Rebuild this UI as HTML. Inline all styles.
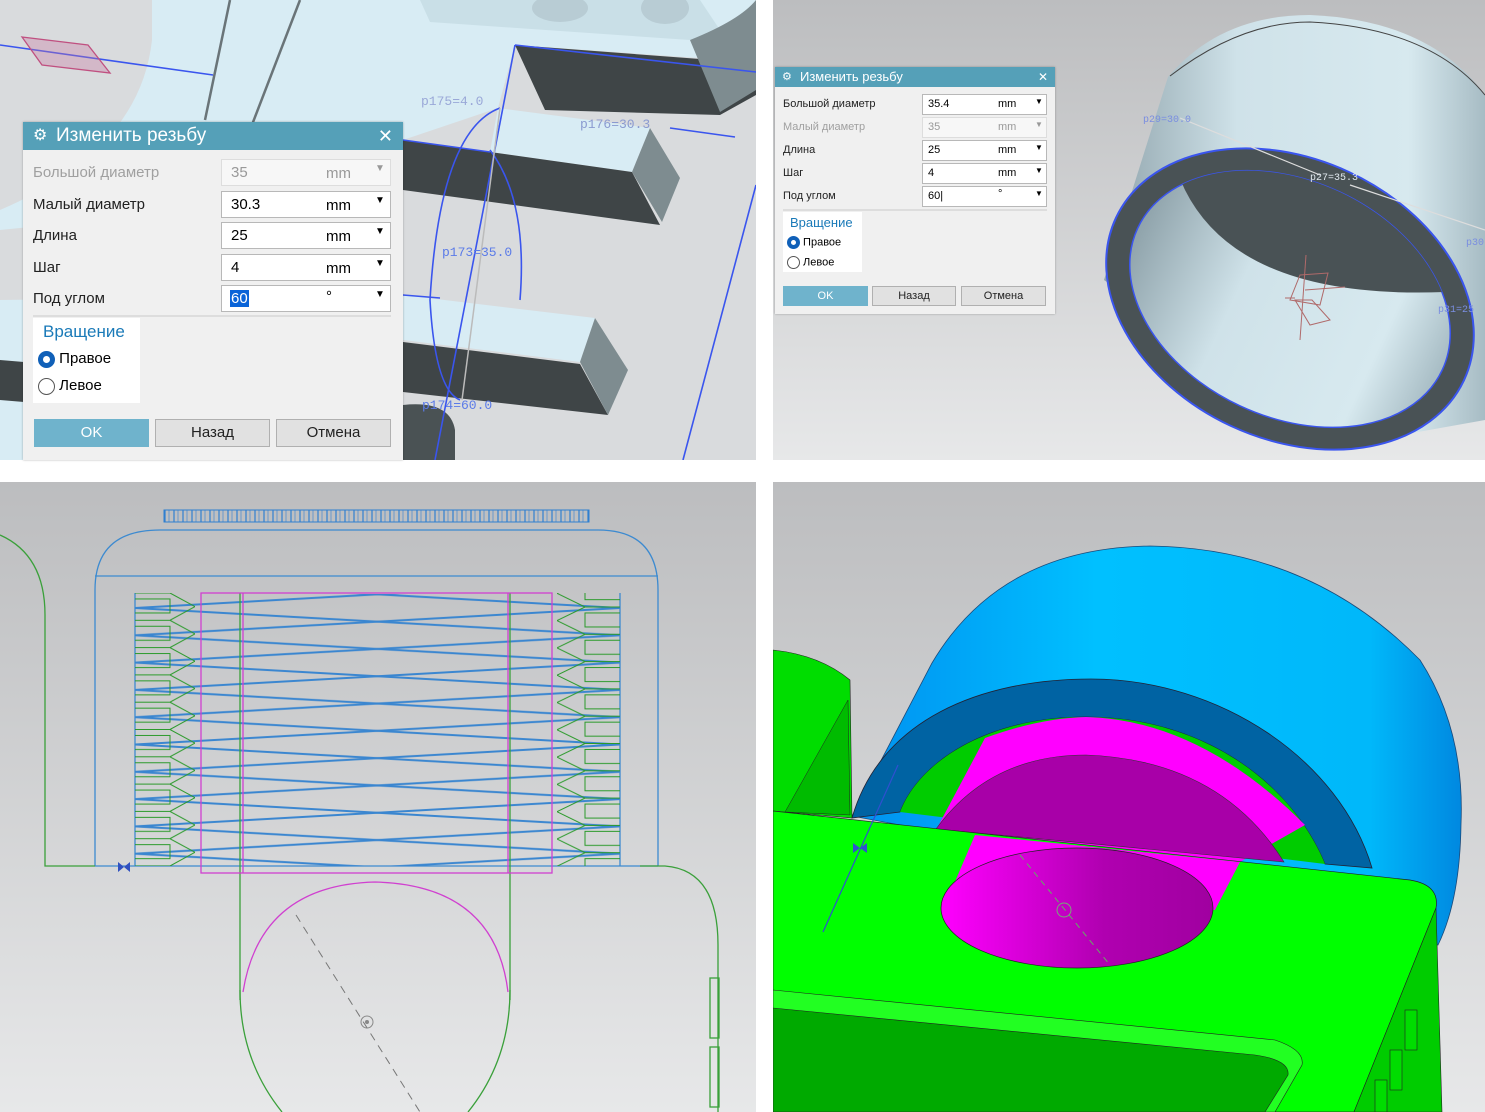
<!DOCTYPE html>
<html><head><meta charset="utf-8">
<style>
*{margin:0;padding:0;box-sizing:border-box}
body{width:1485px;height:1112px;background:#fff;position:relative;overflow:hidden;font-family:"Liberation Sans","DejaVu Sans",sans-serif}
svg{position:absolute;left:0;top:0}
.dlg{position:absolute;background:#f0f0f0;box-shadow:0 0 2px rgba(0,0,0,.3)}
.tt{background:#55a0b8;color:#fff;position:relative}
.lbl{position:absolute;color:#222}
.dis{color:#a0a0a0}
.inp{position:absolute;background:#fff;border:1px solid #b8b8b8}
.inp span{position:absolute}
.btn{position:absolute;background:#e1e1e1;border:1px solid #b0b0b0;text-align:center;color:#222}
.ok{background:#6fb3cc;border-color:#6fb3cc;color:#fff}
.grp{position:absolute;background:#fff}
.rad{display:inline-block;border-radius:50%;vertical-align:middle}
</style></head><body>
<svg width="1485" height="1112" viewBox="0 0 1485 1112">
<defs>
<linearGradient id="g2" x1="0" y1="0" x2="0" y2="1"><stop offset="0" stop-color="#bcbdbf"/><stop offset="1" stop-color="#e7e8e9"/></linearGradient>
<linearGradient id="cyl" x1="0" y1="0" x2="1" y2="0"><stop offset="0" stop-color="#8fa3ab"/><stop offset=".35" stop-color="#cfe2e9"/><stop offset=".8" stop-color="#d7e9ef"/><stop offset="1" stop-color="#a7bcc4"/></linearGradient>
<linearGradient id="dome" x1="0" y1="0" x2="1" y2="0"><stop offset="0" stop-color="#0090f0"/><stop offset=".4" stop-color="#00c0ff"/><stop offset=".85" stop-color="#00b8fa"/><stop offset="1" stop-color="#0088e0"/></linearGradient>
<linearGradient id="mag" x1="0" y1="0" x2="1" y2="0"><stop offset="0" stop-color="#ff00ff"/><stop offset=".6" stop-color="#b000b0"/><stop offset="1" stop-color="#a000a0"/></linearGradient>
<pattern id="thr" x="135" y="608" width="485" height="27.3" patternUnits="userSpaceOnUse">
<g stroke="#3a86d0" stroke-width="2" fill="none"><line x1="0" y1="0" x2="485" y2="27.3"/><line x1="0" y1="27.3" x2="485" y2="0"/></g>
</pattern>
<pattern id="zl" x="135" y="593" width="60" height="27.3" patternUnits="userSpaceOnUse">
<g stroke="#2a9a2a" stroke-width="1" fill="none"><polyline points="0,0 35,0 60,13.6 35,27.3 0,27.3"/><polyline points="0,6 35,6 35,20 0,20"/></g>
</pattern>
<pattern id="zr" x="557" y="607" width="63" height="27.3" patternUnits="userSpaceOnUse">
<g stroke="#2a9a2a" stroke-width="1" fill="none"><polyline points="63,0 28,0 0,13.6 28,27.3 63,27.3"/><polyline points="63,6 28,6 28,20 63,20"/></g>
</pattern>
<pattern id="teeth" x="164" y="510" width="9" height="12" patternUnits="userSpaceOnUse"><line x1="1" y1="0" x2="1" y2="12" stroke="#2f7fd0" stroke-width="1.2"/><line x1="5" y1="0" x2="5" y2="12" stroke="#2f7fd0" stroke-width=".6"/></pattern>
<clipPath id="c1"><rect x="0" y="0" width="756" height="460"/></clipPath>
<clipPath id="c2"><rect x="773" y="0" width="712" height="460"/></clipPath>
<clipPath id="c4"><rect x="773" y="482" width="712" height="630"/></clipPath>
<clipPath id="inner"><ellipse cx="1290" cy="299" rx="168" ry="118" transform="rotate(25 1290 299)"/></clipPath>
</defs>

<!-- Q1 -->
<g clip-path="url(#c1)">
<rect x="0" y="0" width="756" height="460" fill="#d9dbdd"/>
<path d="M152,0 L756,0 L756,62 L515,45 L498,108 L403,140 L403,190 L0,230 L0,210 Q140,150 152,40 Z" fill="#d8ecf4"/>
<path d="M0,300 L403,295 L403,460 L0,460 Z" fill="#d8ecf4"/>
<path d="M0,360 L60,365 L60,405 L0,400 Z" fill="#3f4547"/>
<g stroke="#6a7478" stroke-width="2.5" fill="none"><line x1="300" y1="0" x2="250" y2="130"/><line x1="230" y1="0" x2="205" y2="120"/></g>
<path d="M420,0 L700,0 L720,30 L690,40 L430,22 Z" fill="#c9dfe7"/>
<ellipse cx="560" cy="8" rx="28" ry="14" fill="#b8ccd4"/><ellipse cx="665" cy="8" rx="24" ry="16" fill="#b8ccd4"/>
<path d="M515,45 L740,62 L756,70 L756,95 L720,115 L545,110 Z" fill="#3f4547"/>
<path d="M690,40 Q740,20 756,0 L756,90 L720,112 Z" fill="#7e8c90"/>
<path d="M498,108 L650,128 L632,172 L490,152 Z" fill="#d8ecf4"/>
<path d="M403,140 L490,152 L632,172 L660,225 L403,190 Z" fill="#3f4547"/>
<path d="M650,128 L680,178 L662,222 L632,172 Z" fill="#7e8c90"/>
<path d="M403,295 L595,318 L580,362 L403,340 Z" fill="#d8ecf4"/>
<path d="M403,342 L580,364 L608,415 L403,392 Z" fill="#3f4547"/>
<path d="M595,318 L628,370 L608,415 L580,362 Z" fill="#7e8c90"/>
<path d="M403,405 Q450,400 455,430 L455,460 L403,460 Z" fill="#4a5254"/>
<g stroke="#3a55ee" stroke-width="1.6" fill="none">
<line x1="0" y1="45" x2="213" y2="75"/>
<line x1="515" y1="45" x2="756" y2="72"/>
<line x1="515" y1="45" x2="435" y2="460"/>
<line x1="403" y1="140" x2="490" y2="152"/>
<line x1="403" y1="295" x2="440" y2="298"/>
<line x1="756" y1="185" x2="683" y2="460"/>
<path d="M500,108 Q440,130 430,300 Q435,390 460,400" />
<path d="M520,300 Q528,200 490,150"/>
<line x1="670" y1="128" x2="735" y2="137"/>
</g>
<line x1="500" y1="108" x2="462" y2="400" stroke="#bbb" stroke-width="1.5"/>
<path d="M22,37 L88,45 L110,73 L42,65 Z" fill="rgba(200,120,160,.35)" stroke="#c05080" stroke-width="1.3"/>
<g fill="#5b7be8" font-family="Liberation Mono,monospace" font-size="13"><text x="421" y="105" fill="#9aa8d8">p175=4.0</text><text x="580" y="128" fill="#8a9ad0">p176=30.3</text><text x="442" y="256">p173=35.0</text><text x="422" y="409">p174=60.0</text></g>
</g>

<!-- Q2 -->
<g clip-path="url(#c2)">
<rect x="773" y="0" width="712" height="460" fill="url(#g2)"/>
<path d="M1104,280 L1168,77 Q1220,15 1310,15 Q1430,20 1485,95 L1485,420 L1340,446 Z" fill="url(#cyl)"/>
<path d="M1170,76 Q1240,22 1310,22 Q1430,28 1485,95" stroke="#444" stroke-width="1" fill="none"/>
<ellipse cx="1290" cy="299" rx="192" ry="140" transform="rotate(25 1290 299)" fill="#495255" stroke="#3a55ee" stroke-width="2"/>
<ellipse cx="1290" cy="299" rx="168" ry="118" transform="rotate(25 1290 299)" fill="url(#cyl)" stroke="#3a55ee" stroke-width="1.5"/>
<path clip-path="url(#inner)" d="M1185,190 Q1240,300 1445,292 L1500,0 L1100,0 Z" fill="#495255"/>
<g stroke="#b06a6a" fill="none" stroke-width="1"><line x1="1306" y1="255" x2="1300" y2="340"/><line x1="1305" y1="290" x2="1345" y2="287"/><path d="M1300,275 L1328,273 L1320,305 L1290,300 Z"/><path d="M1295,300 L1312,300 L1330,320 L1310,325 Z"/><line x1="1285" y1="298" x2="1295" y2="298"/></g>
<g stroke="#ddd" stroke-width="1.2"><line x1="1180" y1="118" x2="1320" y2="175"/><line x1="1350" y1="185" x2="1485" y2="230"/></g>
<g fill="#7a8ee0" font-family="Liberation Mono,monospace" font-size="10"><text x="1143" y="122">p29=30.0</text><text x="1310" y="180" fill="#e0e8ee">p27=35.3</text><text x="1466" y="245">p30</text><text x="1438" y="312">p31=25</text></g>
</g>

<!-- Q3 -->
<rect x="0" y="482" width="756" height="630" fill="url(#g2)"/>
<rect x="164" y="510" width="425" height="12" fill="url(#teeth)" stroke="#2f7fd0" stroke-width="1"/>
<g stroke="#3c8ad0" stroke-width="1.3" fill="none">
<path d="M95,866 L95,590 Q95,530 160,530 L598,530 Q658,530 658,590 L658,866"/>
<line x1="95" y1="576" x2="658" y2="576"/>
<line x1="135" y1="593" x2="135" y2="866"/><line x1="620" y1="593" x2="620" y2="866"/>
<line x1="95" y1="866" x2="658" y2="866"/>
</g>
<rect x="135" y="594" width="485" height="272" fill="url(#thr)"/>
<rect x="135" y="593" width="60" height="273" fill="url(#zl)"/>
<rect x="557" y="593" width="63" height="273" fill="url(#zr)"/>
<g stroke="#3aa03a" stroke-width="1.3" fill="none">
<path d="M0,535 Q45,555 45,615 L45,866 L95,866"/>
<path d="M640,866 L665,866 Q718,870 718,945 L718,1112"/>
<line x1="240" y1="593" x2="240" y2="1000"/><line x1="510" y1="593" x2="510" y2="1000"/>
<path d="M240,990 Q240,1060 282,1112"/><path d="M510,990 Q510,1060 468,1112"/>
<rect x="710" y="978" width="9" height="60"/><rect x="710" y="1047" width="9" height="60"/>
</g>
<g stroke="#d040d0" stroke-width="1.3" fill="none">
<rect x="201" y="593" width="351" height="280"/>
<line x1="243" y1="593" x2="243" y2="873"/><line x1="508" y1="593" x2="508" y2="873"/>
<path d="M243,992 Q260,885 375,882 Q495,885 508,992"/>
</g>
<line x1="296" y1="915" x2="420" y2="1112" stroke="#777" stroke-dasharray="8,6"/>
<circle cx="367" cy="1022" r="6" fill="none" stroke="#888"/><circle cx="367" cy="1022" r="2" fill="#888"/>
<path d="M118,862 L124,867 L118,872 Z M130,862 L124,867 L130,872 Z" fill="#3050c0"/>

<!-- Q4 -->
<g clip-path="url(#c4)">
<rect x="773" y="482" width="712" height="630" fill="url(#g2)"/>
<path d="M852,816 L932,663 Q1000,548 1150,546 Q1310,548 1420,660 Q1465,730 1461,824 Q1460,900 1438,945 L1300,900 Z" fill="url(#dome)" stroke="#1a4a7a" stroke-width=".8"/>
<path d="M852,818 C880,720 980,679 1091,679 C1220,679 1340,760 1372,868 L1325,864 C1290,780 1200,717 1086,717 C990,717 920,760 900,812 Z" fill="#0063a3" stroke="#223" stroke-width=".8"/>
<path d="M900,812 C920,760 990,717 1086,717 C1200,717 1290,780 1325,864 Z" fill="#00cc00"/>
<path d="M985,738 Q1040,718 1086,717 Q1200,720 1305,825 L1240,862 L936,830 Z" fill="#ff00ff"/>
<path d="M936,829 Q990,755 1086,755 Q1220,760 1284,862 Z" fill="#a800a8" stroke="#333" stroke-width=".6"/>
<path d="M773,650 Q820,655 850,680 L852,818 L773,811 Z" fill="#00dd00" stroke="#222" stroke-width=".6"/>
<path d="M785,812 L848,700 L850,815 Z" fill="#00bb00" stroke="#222" stroke-width=".5"/>
<path d="M773,811 L1410,880 Q1440,885 1436,908 L1354,1112 L773,1112 Z" fill="#00ff00" stroke="#222" stroke-width=".7"/>
<path d="M1436,908 L1442,1112 L1354,1112 Z" fill="#00cc00" stroke="#222" stroke-width=".6"/>
<path d="M773,990 L1275,1040 Q1305,1050 1302,1065 L1275,1112 L773,1112 Z" fill="#22ff22" stroke="#222" stroke-width=".6"/>
<path d="M773,1008 L1255,1055 Q1290,1060 1288,1075 L1265,1112 L773,1112 Z" fill="#00aa00" stroke="#222" stroke-width=".6"/>
<path d="M975,835 L1240,862 L1215,910 L945,905 Z" fill="#ff00ff"/>
<ellipse cx="1077" cy="908" rx="136" ry="60" fill="url(#mag)" stroke="#222" stroke-width=".7"/>
<line x1="1020" y1="855" x2="1110" y2="965" stroke="#6a6" stroke-dasharray="6,5"/>
<circle cx="1064" cy="910" r="7" fill="none" stroke="#7a7"/>
<line x1="898" y1="765" x2="823" y2="932" stroke="#3050d0" stroke-width="1.2"/>
<path d="M853,843 L860,848 L853,853 Z M867,843 L860,848 L867,853 Z" fill="#3050d0"/>
<g stroke="#222" stroke-width=".6" fill="#00dd00"><rect x="1405" y="1010" width="12" height="40"/><rect x="1390" y="1050" width="12" height="40"/><rect x="1375" y="1080" width="12" height="32"/></g>
</g>
</svg>

<!-- Dialog 1 -->
<div class="dlg" style="left:23px;top:122px;width:380px;height:338px">
<div class="tt" style="height:28px;font-size:19px;line-height:28px;padding-left:33px">Изменить резьбу<span style="position:absolute;left:10px;top:0;font-size:16px">⚙</span><span style="position:absolute;right:10px;top:0;font-size:18px">✕</span></div>
<div class="lbl dis" style="left:10px;top:42px;font-size:15px">Большой диаметр</div>
<div class="lbl" style="left:10px;top:74px;font-size:15px">Малый диаметр</div>
<div class="lbl" style="left:10px;top:105px;font-size:15px">Длина</div>
<div class="lbl" style="left:10px;top:137px;font-size:15px">Шаг</div>
<div class="lbl" style="left:10px;top:168px;font-size:15px">Под углом</div>
<div class="inp" style="left:198px;top:37px;width:170px;height:27px;background:#f7f7f7;border-color:#ddd;color:#999;font-size:15px"><span style="left:9px;top:4px">35</span><span style="left:104px;top:5px">mm</span><span style="left:153px;top:3px;font-size:10px">▼</span></div>
<div class="inp" style="left:198px;top:69px;width:170px;height:27px;font-size:15px"><span style="left:9px;top:4px">30.3</span><span style="left:104px;top:5px">mm</span><span style="left:153px;top:3px;font-size:10px">▼</span></div>
<div class="inp" style="left:198px;top:100px;width:170px;height:27px;font-size:15px"><span style="left:9px;top:4px">25</span><span style="left:104px;top:5px">mm</span><span style="left:153px;top:3px;font-size:10px">▼</span></div>
<div class="inp" style="left:198px;top:132px;width:170px;height:27px;font-size:15px"><span style="left:9px;top:4px">4</span><span style="left:104px;top:5px">mm</span><span style="left:153px;top:3px;font-size:10px">▼</span></div>
<div class="inp" style="left:198px;top:163px;width:170px;height:27px;font-size:15px"><span style="left:8px;top:4px;background:#0a64d8;color:#fff;padding:0 1px">60</span><span style="left:104px;top:2px">°</span><span style="left:153px;top:3px;font-size:10px">▼</span></div>
<div style="position:absolute;left:10px;top:193px;width:358px;height:2px;background:#ddd"></div>
<div class="grp" style="left:10px;top:196px;width:107px;height:85px">
<div style="position:absolute;left:10px;top:4px;color:#1a7ab8;font-size:17px">Вращение</div>
<div style="position:absolute;left:5px;top:32px;font-size:15px"><span class="rad" style="width:17px;height:17px;border:5px solid #1060b8;background:#fff"></span> Правое</div>
<div style="position:absolute;left:5px;top:59px;font-size:15px"><span class="rad" style="width:17px;height:17px;border:1px solid #555;background:#fff"></span> Левое</div>
</div>
<div class="btn ok" style="left:11px;top:297px;width:115px;height:28px;line-height:26px;font-size:15px">OK</div>
<div class="btn" style="left:132px;top:297px;width:115px;height:28px;line-height:26px;font-size:15px">Назад</div>
<div class="btn" style="left:253px;top:297px;width:115px;height:28px;line-height:26px;font-size:15px">Отмена</div>
</div>

<!-- Dialog 2 -->
<div class="dlg" style="left:775px;top:67px;width:280px;height:247px">
<div class="tt" style="height:20px;font-size:13px;line-height:20px;padding-left:25px">Изменить резьбу<span style="position:absolute;left:7px;top:0;font-size:11px">⚙</span><span style="position:absolute;right:7px;top:0;font-size:12px">✕</span></div>
<div class="lbl" style="left:8px;top:31px;font-size:11px">Большой диаметр</div>
<div class="lbl dis" style="left:8px;top:54px;font-size:11px">Малый диаметр</div>
<div class="lbl" style="left:8px;top:77px;font-size:11px">Длина</div>
<div class="lbl" style="left:8px;top:100px;font-size:11px">Шаг</div>
<div class="lbl" style="left:8px;top:123px;font-size:11px">Под углом</div>
<div class="inp" style="left:147px;top:27px;width:125px;height:21px;font-size:11px"><span style="left:5px;top:3px">35.4</span><span style="left:75px;top:3px">mm</span><span style="left:112px;top:2px;font-size:8px">▼</span></div>
<div class="inp" style="left:147px;top:50px;width:125px;height:21px;font-size:11px;background:#f7f7f7;border-color:#ddd;color:#999"><span style="left:5px;top:3px">35</span><span style="left:75px;top:3px">mm</span><span style="left:112px;top:2px;font-size:8px">▼</span></div>
<div class="inp" style="left:147px;top:73px;width:125px;height:21px;font-size:11px"><span style="left:5px;top:3px">25</span><span style="left:75px;top:3px">mm</span><span style="left:112px;top:2px;font-size:8px">▼</span></div>
<div class="inp" style="left:147px;top:96px;width:125px;height:21px;font-size:11px"><span style="left:5px;top:3px">4</span><span style="left:75px;top:3px">mm</span><span style="left:112px;top:2px;font-size:8px">▼</span></div>
<div class="inp" style="left:147px;top:119px;width:125px;height:21px;font-size:11px"><span style="left:5px;top:3px">60|</span><span style="left:75px;top:1px">°</span><span style="left:112px;top:2px;font-size:8px">▼</span></div>
<div style="position:absolute;left:8px;top:142px;width:264px;height:2px;background:#ddd"></div>
<div class="grp" style="left:8px;top:145px;width:79px;height:60px">
<div style="position:absolute;left:7px;top:3px;color:#1a7ab8;font-size:13px">Вращение</div>
<div style="position:absolute;left:4px;top:24px;font-size:11px"><span class="rad" style="width:13px;height:13px;border:4px solid #1060b8;background:#fff"></span> Правое</div>
<div style="position:absolute;left:4px;top:44px;font-size:11px"><span class="rad" style="width:13px;height:13px;border:1px solid #555;background:#fff"></span> Левое</div>
</div>
<div class="btn ok" style="left:8px;top:219px;width:85px;height:20px;line-height:18px;font-size:11px">OK</div>
<div class="btn" style="left:97px;top:219px;width:84px;height:20px;line-height:18px;font-size:11px">Назад</div>
<div class="btn" style="left:186px;top:219px;width:85px;height:20px;line-height:18px;font-size:11px">Отмена</div>
</div>
</body></html>
